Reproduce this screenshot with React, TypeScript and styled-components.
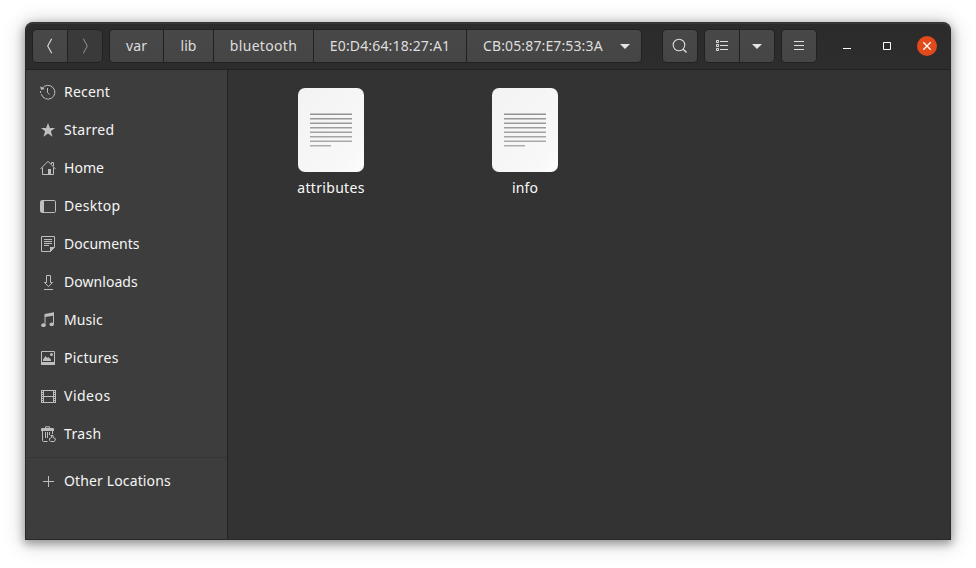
import React from "react";
import styled, { createGlobalStyle, css } from "styled-components";

const GlobalStyle = createGlobalStyle`
  * { box-sizing: border-box; }
  html, body { margin: 0; background: #fff; overflow: hidden; }
  body { font-family: "Noto Sans", "Open Sans", sans-serif; font-size: 14px; }
  svg { display: block; flex: none; }
`;

const Page = styled.div`
  height: 568px;
  padding: 22px 25px 28px;
`;

const Window = styled.main`
  width: 926px;
  height: 518px;
  display: flex;
  flex-direction: column;
  border: 1px solid #292929;
  border-top-color: #333;
  border-radius: 8px 8px 0 0;
  background: #333;
  box-shadow: 0 3px 9px 1px rgba(0, 0, 0, 0.32), 0 2px 20px 3px rgba(0, 0, 0, 0.18);
`;

const HeaderBar = styled.header`
  height: 47px;
  flex: none;
  display: flex;
  align-items: flex-start;
  padding: 6px 13px 0 6px;
  border-bottom: 1px solid #212121;
  border-radius: 7px 7px 0 0;
  background: linear-gradient(#2b2b2b, #2d2d2d);
  box-shadow: inset 0 1px #393939;
`;

const ButtonGroup = styled.div<{ $before?: number }>`
  height: 34px;
  display: flex;
  margin-left: ${(p) => p.$before ?? 0}px;
  border: 1px solid #212121;
  border-radius: 5px;
  overflow: hidden;
  background: #212121;
  gap: 1px;
`;

const HeaderButton = styled.button<{ $width: number; $dim?: boolean; $spacing?: number }>`
  width: ${(p) => p.$width}px;
  height: 32px;
  display: flex;
  align-items: center;
  justify-content: center;
  padding: 0;
  border: 0;
  font: inherit;
  line-height: 20px;
  white-space: nowrap;
  letter-spacing: ${(p) => p.$spacing ?? 0}px;
  color: #dedede;
  background: linear-gradient(#484848, #454545);
  ${(p) =>
    p.$dim &&
    css`
      color: #858585;
      background: #3a3a3a;
    `}
`;

const CurrentFolder = styled(HeaderButton)`
  justify-content: flex-start;
  padding-left: 16px;
`;

const PathText = styled.span`
  padding-bottom: 1px;
`;

const PathArrow = styled.span`
  margin-left: auto;
  margin-right: 11px;
`;

const WindowControls = styled.div`
  height: 34px;
  margin-left: auto;
  display: flex;
  align-items: center;
  gap: 20px;
`;

const ControlButton = styled.button<{ $close?: boolean }>`
  width: 20px;
  height: 20px;
  padding: 0;
  border: 0;
  border-radius: 50%;
  color: #fff;
  background: ${(p) => (p.$close ? "#e2491b" : "transparent")};
`;

const Body = styled.div`
  flex: 1;
  display: flex;
  min-height: 0;
`;

const Sidebar = styled.nav`
  width: 202px;
  padding-top: 3px;
  border-right: 1px solid #222;
  background: #3d3d3d;
`;

const Place = styled.a`
  height: 38px;
  display: flex;
  align-items: center;
  gap: 8px;
  padding-left: 14px;
  color: #bebebe;
`;

const PlaceLabel = styled.span<{ $spacing: number }>`
  color: #f5f5f5;
  line-height: 20px;
  padding-bottom: 1px;
  letter-spacing: ${(p) => p.$spacing}px;
`;

const Divider = styled.hr`
  height: 1px;
  margin: 4px 0;
  border: 0;
  background: #363636;
`;

const Files = styled.section`
  flex: 1;
  display: grid;
  grid-template-columns: 194px 194px;
  align-content: start;
  padding: 18px 0 0 6px;
  background: #333;
`;

const File = styled.figure`
  margin: 0;
  display: flex;
  flex-direction: column;
  align-items: center;
`;

const FileName = styled.figcaption<{ $spacing: number }>`
  margin-top: 6px;
  line-height: 20px;
  color: #fafafa;
  letter-spacing: ${(p) => p.$spacing}px;
`;

const Icon = ({ children }: { children: React.ReactNode }) => (
  <svg width="16" height="16" viewBox="0 0 16 16" fill="none" stroke="currentColor">
    {children}
  </svg>
);

const DownArrow = () => (
  <svg width="10" height="5" viewBox="0 0 10 5">
    <path d="M0 0H10L5 5Z" fill="#e4e4e4" />
  </svg>
);

const places: { name: string; spacing: number; icon: React.ReactNode }[] = [
  {
    name: "Recent",
    spacing: 0.2,
    icon: (
      <>
        <path d="M2.3 4.3A6.9 6.9 0 1 1 1.35 10.2M.6 7V9" />
        <path d="M.2 2.6L1 5.8L4.6 5.2L3 3.6Z" fill="currentColor" stroke="none" />
        <path d="M7.5 4V8.6L9.4 10.5" />
      </>
    ),
  },
  {
    name: "Starred",
    spacing: 0.28,
    icon: (
      <path
        d="M8 1L9.9 6H15L10.9 9.2L12.5 14.8L8 11.5L3.5 14.8L5.1 9.2L1 6H6.1Z"
        fill="currentColor"
        stroke="none"
      />
    ),
  },
  {
    name: "Home",
    spacing: 0.05,
    icon: (
      <>
        <path d="M.5 9L8 1.3L15.5 9M2.5 7.5V14.5H13.5V7.5M11.5 4V2.5H13.5V6" />
        <path d="M8 9H11V15H8Z" fill="currentColor" stroke="none" />
      </>
    ),
  },
  {
    name: "Desktop",
    spacing: 0.28,
    icon: (
      <>
        <rect x=".5" y="2.5" width="15" height="12" rx="1.2" />
        <path d="M1 3H4V14H1Z" fill="currentColor" stroke="none" />
      </>
    ),
  },
  {
    name: "Documents",
    spacing: 0,
    icon: (
      <>
        <path d="M1.5.5H14.5V11L10.5 15.5H1.5ZM4 3.5H12M4 5.5H12M4 7.5H12M4 9.5H9" />
        <path d="M10 11H15L10 16Z" fill="currentColor" stroke="none" />
      </>
    ),
  },
  {
    name: "Downloads",
    spacing: 0.05,
    icon: <path d="M6.5 1.5H10.5V8.5H12.5L8.5 12.7L4.5 8.5H6.5ZM4 15.5H13" />,
  },
  {
    name: "Music",
    spacing: 0.1,
    icon: (
      <g fill="currentColor" stroke="none">
        <path d="M4.5 2L14 .3V12.5H13V3.8L5.5 5V13.5H4.5Z" />
        <ellipse cx="3.4" cy="13.2" rx="2.2" ry="1.9" />
        <ellipse cx="11.7" cy="12.3" rx="2.2" ry="1.9" />
      </g>
    ),
  },
  {
    name: "Pictures",
    spacing: 0.25,
    icon: (
      <>
        <path d="M1.5 1.5H14.5V14.5H1.5Z" />
        <path d="M1 12H15V15H1ZM3 11V9.5L5.5 6L7.3 8L8.2 7L11 9.5V11Z" fill="currentColor" stroke="none" />
        <circle cx="11.5" cy="4.5" r="1.5" fill="currentColor" stroke="none" />
      </>
    ),
  },
  {
    name: "Videos",
    spacing: 0.5,
    icon: (
      <>
        <path d="M3.5 2V15M13.5 2V15M3.5 2.5H13.5M3.5 8.5H13.5M3.5 14.5H13.5M1.5 2V15M15.5 2V15" />
        <path d="M2 2.5H3M2 4.5H3M2 6.5H3M2 8.5H3M2 10.5H3M2 12.5H3M2 14.5H3M14 2.5H15M14 4.5H15M14 6.5H15M14 8.5H15M14 10.5H15M14 12.5H15M14 14.5H15" />
      </>
    ),
  },
  {
    name: "Trash",
    spacing: 0.35,
    icon: (
      <>
        <path d="M5.5 2.5V.8H9.5V2.5M2.5 5V14.5Q2.5 15.5 3.5 15.5H7.5M5.5 6V12M7.5 6V12M9.5 6V9M12.5 5V8" />
        <path d="M1 3Q1 2 2 2H13Q14 2 14 3V5H1Z" fill="currentColor" stroke="none" />
        <path d="M10.5 9.5H13.5M11.5 10V11.5L9.5 12.6V14.5L10.5 15.5H14L15.3 14.4V12.6L13 11.5V10" />
      </>
    ),
  },
];

const TextFile = () => (
  <svg width="66" height="84" viewBox="0 0 66 84">
    <defs>
      <linearGradient id="paper" x1="0" y1="0" x2="1" y2="1">
        <stop offset="0" stopColor="#f3f3f3" />
        <stop offset=".8" stopColor="#f8f8f8" />
        <stop offset="1" stopColor="#fdfdfd" />
      </linearGradient>
      <linearGradient id="lines" x1="0" y1="25" x2="0" y2="59" gradientUnits="userSpaceOnUse">
        <stop offset="0" stopColor="#929292" />
        <stop offset="1" stopColor="#adadad" />
      </linearGradient>
    </defs>
    <rect width="66" height="84" rx="7" fill="url(#paper)" />
    <path
      d="M12 25.4H54V27H12ZM12 30H54V31.6H12ZM12 34.5H54V36.1H12ZM12 39H54V40.6H12ZM12 43.5H54V45.1H12ZM12 48H54V49.6H12ZM12 52.4H54V54H12ZM12 57H33V58.6H12Z"
      fill="url(#lines)"
    />
  </svg>
);

export default function App() {
  return (
    <>
      <GlobalStyle />
      <Page>
        <Window>
          <HeaderBar>
            <ButtonGroup>
              <HeaderButton $width={34} aria-label="Back">
                <Icon>
                  <path d="M9.7 .7L5.7 8L9.7 15.3" strokeWidth="1.1" />
                </Icon>
              </HeaderButton>
              <HeaderButton $width={34} $dim aria-label="Forward">
                <Icon>
                  <path d="M6.3 .7L10.3 8L6.3 15.3" strokeWidth="1.1" />
                </Icon>
              </HeaderButton>
            </ButtonGroup>
            <ButtonGroup $before={6}>
              <HeaderButton $width={53} $spacing={0.1}><PathText>var</PathText></HeaderButton>
              <HeaderButton $width={49} $spacing={0.1}><PathText>lib</PathText></HeaderButton>
              <HeaderButton $width={99} $spacing={0.32}><PathText>bluetooth</PathText></HeaderButton>
              <HeaderButton $width={152} $spacing={0.15}><PathText>E0:D4:64:18:27:A1</PathText></HeaderButton>
              <CurrentFolder $width={174} $spacing={0.13}>
                <PathText>CB:05:87:E7:53:3A</PathText>
                <PathArrow><DownArrow /></PathArrow>
              </CurrentFolder>
            </ButtonGroup>
            <ButtonGroup $before={20}>
              <HeaderButton $width={34} aria-label="Search">
                <Icon>
                  <circle cx="7" cy="7" r="5.8" strokeWidth="1.1" />
                  <path d="M11.2 11.2L14.5 14.5" strokeWidth="1.4" />
                </Icon>
              </HeaderButton>
            </ButtonGroup>
            <ButtonGroup $before={6}>
              <HeaderButton $width={34} aria-label="List view">
                <Icon>
                  <path d="M2.5 2.5H4.5V4.5H2.5ZM2.5 6.5H4.5V8.5H2.5ZM2.5 10.5H4.5V12.5H2.5ZM6 3.5H14M6 7.5H14M6 11.5H14" />
                </Icon>
              </HeaderButton>
              <HeaderButton $width={34} aria-label="View options"><DownArrow /></HeaderButton>
            </ButtonGroup>
            <ButtonGroup $before={6}>
              <HeaderButton $width={34} aria-label="Menu">
                <Icon><path d="M3 3.5H13M3 7.5H13M3 11.5H13" /></Icon>
              </HeaderButton>
            </ButtonGroup>
            <WindowControls>
              <ControlButton aria-label="Minimize">
                <svg width="20" height="20" stroke="#fff"><path d="M6 12.5H14" /></svg>
              </ControlButton>
              <ControlButton aria-label="Maximize">
                <svg width="20" height="20" stroke="#fff" fill="none"><path d="M6.5 6.5H13.5V13.5H6.5Z" /></svg>
              </ControlButton>
              <ControlButton $close aria-label="Close">
                <svg width="20" height="20" stroke="#fff"><path d="M6.3 6.3L13.7 13.7M13.7 6.3L6.3 13.7" strokeWidth="1.3" /></svg>
              </ControlButton>
            </WindowControls>
          </HeaderBar>
          <Body>
            <Sidebar>
              {places.map((p) => (
                <Place key={p.name}>
                  <Icon>{p.icon}</Icon>
                  <PlaceLabel $spacing={p.spacing}>{p.name}</PlaceLabel>
                </Place>
              ))}
              <Divider />
              <Place>
                <Icon><path d="M3 8.5H14M8.5 3V14" /></Icon>
                <PlaceLabel $spacing={0.13}>Other Locations</PlaceLabel>
              </Place>
            </Sidebar>
            <Files>
              <File>
                <TextFile />
                <FileName $spacing={0.3}>attributes</FileName>
              </File>
              <File>
                <TextFile />
                <FileName $spacing={0.15}>info</FileName>
              </File>
            </Files>
          </Body>
        </Window>
      </Page>
    </>
  );
}
